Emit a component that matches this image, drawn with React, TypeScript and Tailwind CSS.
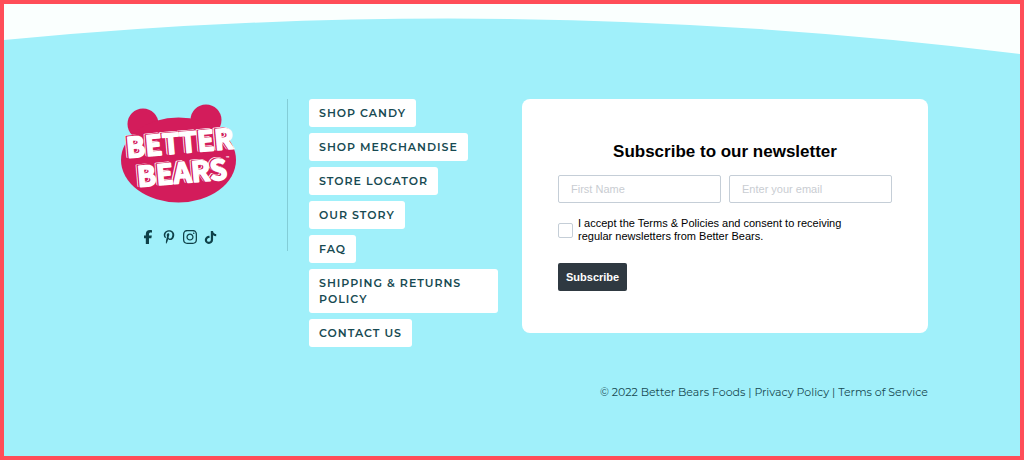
import React from "react";
import { FaFacebookF, FaPinterestP, FaInstagram, FaTiktok } from "react-icons/fa6";

const navLinks = [
  "Shop Candy",
  "Shop Merchandise",
  "Store Locator",
  "Our Story",
  "FAQ",
  "Shipping & Returns Policy",
  "Contact Us",
];

const socials = [
  { label: "Facebook", icon: <FaFacebookF className="size-[14px]" /> },
  { label: "Pinterest", icon: <FaPinterestP className="size-[14px]" /> },
  { label: "Instagram", icon: <FaInstagram className="size-4" /> },
  { label: "TikTok", icon: <FaTiktok className="size-[13px]" /> },
];

function LogoWord({ x, y, children }: { x: number; y: number; children: string }) {
  return (
    <g transform={`rotate(-5 ${x} ${y})`} fontSize="28" strokeLinejoin="round">
      <text x={x - 2} y={y - 1} fill="#fff" stroke="#fff" strokeWidth="2">
        {children}
      </text>
      <text x={x - 1.2} y={y - 0.5} fill="#d31c5b" stroke="#d31c5b" strokeWidth="1.9">
        {children}
      </text>
      <text x={x} y={y} fill="#fff" stroke="#fff" strokeWidth="1.5">
        {children}
      </text>
    </g>
  );
}

function Logo() {
  return (
    <svg
      viewBox="0 0 116 98"
      className="h-[98px] w-[116px] overflow-visible font-['Noto_Sans_CJK_SC','Open_Sans',sans-serif] font-bold"
      role="img"
      aria-label="Better Bears"
    >
      <g fill="#d31c5b">
        <circle cx="22" cy="20" r="15.5" />
        <circle cx="85" cy="16" r="15.5" />
        <ellipse cx="57.5" cy="56" rx="57.5" ry="42.5" />
      </g>
      <LogoWord x={6} y={54}>
        BETTER
      </LogoWord>
      <LogoWord x={17} y={83}>
        BEARS
      </LogoWord>
      <text x="105" y="56" fontSize="4" fill="#fff">
        ™
      </text>
    </svg>
  );
}

function Newsletter() {
  return (
    <form className="rounded-lg bg-white px-9 pt-[42px] pb-[42px] font-['Liberation_Sans',Arial,sans-serif] text-black">
      <h2 className="text-center text-[17px] leading-[22px] font-bold">
        Subscribe to our newsletter
      </h2>
      <div className="mt-3 grid grid-cols-2 gap-2">
        <input
          type="text"
          aria-label="First Name"
          placeholder="First Name"
          className="h-7 min-w-0 rounded-xs border border-[#c5ced7] px-3 text-[11px] placeholder:text-[#c9cdd2]"
        />
        <input
          type="email"
          aria-label="Email"
          placeholder="Enter your email"
          className="h-7 min-w-0 rounded-xs border border-[#c5ced7] px-3 text-[11px] placeholder:text-[#c9cdd2]"
        />
      </div>
      <div className="mt-[14px] flex items-center gap-[5px]">
        <input
          id="accept"
          type="checkbox"
          className="size-[15px] shrink-0 appearance-none rounded-xs border border-[#c5ced7] checked:bg-[#2f3941]"
        />
        <label htmlFor="accept" className="max-w-[290px] text-[11px] leading-[13px]">
          I accept the Terms &amp; Policies and consent to receiving regular newsletters from Better
          Bears.
        </label>
      </div>
      <button
        type="submit"
        className="mt-5 h-7 rounded-xs bg-[#2f3941] px-2 text-[11px] font-bold text-white"
      >
        Subscribe
      </button>
    </form>
  );
}

function App() {
  return (
    <footer className="min-h-screen border-4 border-[#ff4d58] bg-[#a0f0fa] font-[Montserrat,Inter,sans-serif] text-[#174a52]">
      <svg viewBox="0 0 1016 50" preserveAspectRatio="none" className="block h-[50px] w-full">
        <path d="M0 0H1016V50Q508 -13 0 36Z" fill="#fafffe" />
      </svg>

      <div className="grid grid-cols-[192px_189px_1fr] px-[92px] pt-[45px]">
        <div className="flex h-[152px] flex-col items-center border-r border-[#83cdd7] pt-[5px] pr-[25px]">
          <Logo />
          <div className="mt-5 flex items-center gap-[5px]">
            {socials.map((s) => (
              <a
                key={s.label}
                href="#"
                aria-label={s.label}
                className="flex h-[30px] w-4 items-center justify-center text-[#0f4149]"
              >
                {s.icon}
              </a>
            ))}
          </div>
        </div>

        <nav className="ml-[21px] flex w-[189px] flex-col items-start gap-[6px]">
          {navLinks.map((link) => (
            <a
              key={link}
              href="#"
              className="rounded-[3px] bg-white px-[10px] py-[6px] text-[11px] leading-4 font-semibold tracking-[1px] uppercase"
            >
              {link}
            </a>
          ))}
        </nav>

        <div className="ml-[45px]">
          <Newsletter />
        </div>
      </div>

      <p className="px-[92px] pt-[37px] pb-4 text-right text-[11px] leading-4">
        © 2022 Better Bears Foods | <a href="#">Privacy Policy</a> |{" "}
        <a href="#">Terms of Service</a>
      </p>
    </footer>
  );
}

export default App;
